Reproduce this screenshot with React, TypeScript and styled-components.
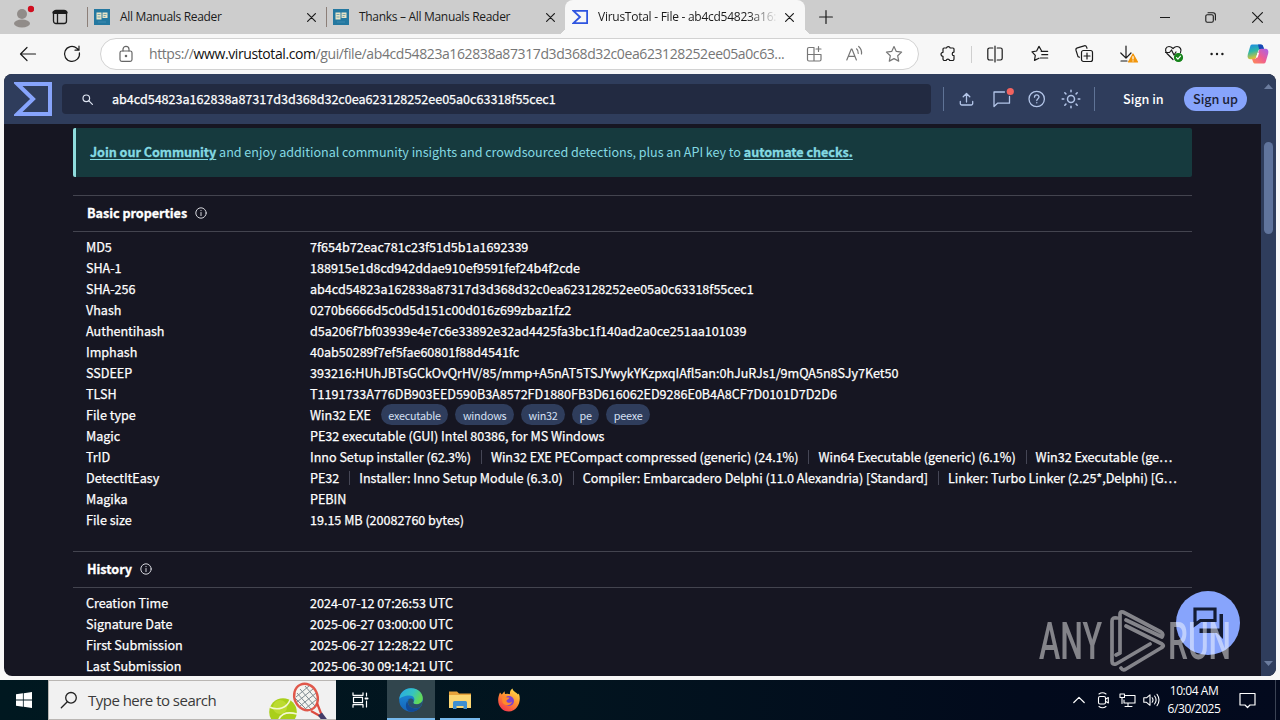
import React, { ReactNode } from "react"
import styled, { createGlobalStyle, css } from "styled-components"

const segoe = `"Open Sans", "Noto Sans", sans-serif`
const vt = `"Noto Sans CJK SC", "Noto Sans CJK JP", "Open Sans", sans-serif`

const GlobalStyle = createGlobalStyle`
  * {
    box-sizing: border-box;
  }
  body {
    margin: 0;
    overflow: hidden;
    font-family: ${segoe};
  }
`

const Screen = styled.div`
  position: relative;
  display: flex;
  flex-direction: column;
  width: 1280px;
  height: 720px;
  overflow: hidden;
  background-color: #f7f7f7;
`

/* a fixed slot that centers whatever icon it gets */
const Slot = styled.div<{ $w: number }>`
  display: flex;
  flex: none;
  align-items: center;
  justify-content: center;
  width: ${({ $w }) => $w}px;
  height: 100%;
`

const Gap = styled.div<{ $w: number }>`
  flex: none;
  width: ${({ $w }) => $w}px;
`

type IconProps = {
  w?: number
  h?: number
  stroke?: string
  sw?: number
  children: ReactNode
}
const Icon = ({
  w = 20,
  h = w,
  stroke = "#1b1b1b",
  sw = 1.2,
  children,
}: IconProps) => (
  <svg
    width={w}
    height={h}
    viewBox={`0 0 ${w} ${h}`}
    fill="none"
    stroke={stroke}
    strokeWidth={sw}
    strokeLinecap="round"
    strokeLinejoin="round"
  >
    {children}
  </svg>
)

/* ---------- tab strip ---------- */

const TabStrip = styled.div`
  display: flex;
  flex: none;
  height: 34px;
  background-color: #cdcdcd;
`
const TabDivider = styled.div`
  flex: none;
  align-self: center;
  width: 1px;
  height: 20px;
  background-color: #8c7f79;
`
const TabBox = styled.div<{ $active?: boolean }>`
  position: relative;
  display: flex;
  flex: none;
  align-items: center;
  width: ${({ $active }) => ($active ? 240 : 238)}px;
  padding-left: ${({ $active }) => ($active ? 7 : 6)}px;
  ${({ $active }) =>
    $active &&
    css`
      border-radius: 8px 8px 0 0;
      background-color: #f7f7f7;

      &:before,
      &:after {
        content: "";
        position: absolute;
        bottom: 0;
        width: 7px;
        height: 7px;
      }
      &:before {
        left: -7px;
        background: radial-gradient(circle at 0 0, transparent 7px, #f7f7f7 7px);
      }
      &:after {
        right: -7px;
        background: radial-gradient(
          circle at 100% 0,
          transparent 7px,
          #f7f7f7 7px
        );
      }
    `}
`
const TabTitle = styled.div<{ $spacing: number; $fade?: boolean }>`
  flex: none;
  width: 180px;
  margin-left: 10px;
  white-space: nowrap;
  font-size: 12px;
  line-height: 18px;
  letter-spacing: ${({ $spacing }) => $spacing}px;
  color: #1b1b1b;
  ${({ $fade }) =>
    $fade && "mask-image: linear-gradient(90deg, #000 150px, transparent 180px);"}
`
const StripCenter = styled.div`
  flex: 1;
`

const CloseIcon = ({ size = 9 }: { size?: number }) => (
  <Icon w={size} sw={1.2}>
    <path d={`M.6 .6 ${size - 0.6} ${size - 0.6}M${size - 0.6} .6 .6 ${size - 0.6}`} />
  </Icon>
)

const ReaderFavicon = () => (
  <svg width="16" height="16" viewBox="0 0 16 16">
    <rect width="16" height="16" fill="#2478a0" />
    <path d="M2.500 3.500h5v7h-5zM8.500 3.500h5v5.500h-5z" fill="#e9e4c6" />
    <path d="M3.500 5.500h3M3.500 8h3M9.500 5.500h3M9.500 7.500h2" stroke="#6aa0ae" strokeWidth=".9" />
    <path d="M4 13h8" stroke="#3f8bb0" />
  </svg>
)

const Sigma = ({ w, h, color, sw }: { w: number; h: number; color: string; sw: number }) => (
  <svg width={w} height={h} viewBox="0 0 38 34" preserveAspectRatio="none">
    <path
      d="M3.5 2H36v30H3.5L19 17z"
      fill="none"
      stroke={color}
      strokeWidth={sw}
      strokeMiterlimit="10"
    />
  </svg>
)

const Tabs = () => (
  <TabStrip>
    <Slot $w={44}>
      <Icon w={24} stroke="none">
        <circle cx="12" cy="9" r="5" fill="#918c89" />
        <ellipse cx="12" cy="18.500" rx="8" ry="4" fill="#918c89" />
        <circle cx="21" cy="4" r="3.2" fill="#d00e1f" />
      </Icon>
    </Slot>
    <Slot $w={32}>
      <Icon w={16} sw={1.3}>
        <rect x="1.5" y="1.5" width="13" height="13" rx="2.5" />
        <path d="M2 3.4h12" strokeWidth="3.2" />
        <path d="M5.5 4v10" />
      </Icon>
    </Slot>
    <Gap $w={11} />
    <TabDivider />
    <TabBox>
      <ReaderFavicon />
      <TabTitle $spacing={-0.32}>All Manuals Reader</TabTitle>
      <Slot $w={22}>
        <CloseIcon />
      </Slot>
    </TabBox>
    <TabDivider />
    <TabBox>
      <ReaderFavicon />
      <TabTitle $spacing={-0.31}>Thanks – All Manuals Reader</TabTitle>
      <Slot $w={22}>
        <CloseIcon />
      </Slot>
    </TabBox>
    <TabBox $active>
      <Sigma w={16} h={14} color="#2f55e0" sw={4.4} />
      <TabTitle $spacing={-0.26} $fade>
        VirusTotal - File - ab4cd54823a16:
      </TabTitle>
      <Slot $w={22}>
        <CloseIcon />
      </Slot>
    </TabBox>
    <Slot $w={42}>
      <Icon w={14}>
        <path d="M7 .6v12.8M.6 7h12.8" />
      </Icon>
    </Slot>
    <StripCenter />
    <Slot $w={42}>
      <Icon w={10}>
        <path d="M0 5.5h10" strokeWidth="1" />
      </Icon>
    </Slot>
    <Slot $w={48}>
      <Icon w={11} sw={1.1}>
        <rect x=".8" y="2.8" width="7.5" height="7.5" rx="1.5" />
        <path d="M3 .8h5a2.4 2.4 0 0 1 2.4 2.4v4.8" />
      </Icon>
    </Slot>
    <Slot $w={46}>
      <CloseIcon size={11} />
    </Slot>
  </TabStrip>
)

/* ---------- toolbar ---------- */

const Toolbar = styled.div`
  display: flex;
  flex: none;
  align-items: center;
  height: 40px;
  padding-left: 6px;
`
const AddressBar = styled.div`
  display: flex;
  flex: none;
  align-items: center;
  width: 819px;
  height: 32px;
  margin-left: 6px;
  padding-left: 5px;
  border: 1px solid #d2d2d2;
  border-radius: 16px;
  background-color: #fff;
`
const Url = styled.div`
  flex: none;
  width: 645px;
  margin-left: 3px;
  white-space: nowrap;
  font-size: 14px;
  line-height: 20px;
  letter-spacing: -0.4px;
  color: #767676;

  b {
    font-weight: 400;
    color: #111;
  }
`
const ToolDivider = styled.div`
  flex: none;
  width: 1px;
  height: 17px;
  background-color: #cfcfcf;
`

const BrowserBar = () => (
  <Toolbar>
    <Slot $w={44}>
      <Icon>
        <path d="M17.5 10H2.5M9 3.5 2.5 10 9 16.5" />
      </Icon>
    </Slot>
    <Slot $w={44}>
      <Icon>
        <path d="M17.4 8.8A7.5 7.5 0 1 1 14.8 4.2L16.8 6M17 2.2V6.2H13" />
      </Icon>
    </Slot>
    <AddressBar>
      <Slot $w={40}>
        <Icon w={16} h={18} stroke="#666">
          <rect x="2" y="6" width="12" height="10.4" rx="1.8" />
          <path d="M5 6V4.3a3 3 0 0 1 6 0V6" />
          <circle cx="8" cy="11" r=".7" fill="#666" />
        </Icon>
      </Slot>
      <Url>
        https://<b>www.virustotal.com</b>
        /gui/file/ab4cd54823a162838a87317d3d368d32c0ea623128252ee05a0c63...
      </Url>
      <Slot $w={40}>
        <Icon w={18} stroke="#777">
          <path d="M8.5 2.5H4A1.5 1.5 0 0 0 2.5 4v10.5A1.5 1.5 0 0 0 4 16h10.5a1.5 1.5 0 0 0 1.5-1.5V9.5H2.5M9 2.5V16M13.5 1.5v5M11 4h5" />
        </Icon>
      </Slot>
      <Slot $w={40}>
        <Icon w={18} stroke="#777">
          <path d="M1.8 15 6.3 4h.6l4.5 11M3.4 11.3h6.4M11.5 3.8q2 1.6 1.7 4.6M13.7 1.5q3.3 2.8 2.8 7.5" />
        </Icon>
      </Slot>
      <Slot $w={40}>
        <Icon w={18} stroke="#777">
          <path d="m9 1.5 2.3 4.9 5.3.7-3.9 3.7 1 5.3L9 13.6l-4.7 2.5 1-5.3L1.4 7.1l5.3-.7z" />
        </Icon>
      </Slot>
    </AddressBar>
    <Gap $w={8} />
    <Slot $w={42}>
      <Icon w={18}>
        <path d="M5 3h2.4a2 2 0 0 1 3.8 0H14a1 1 0 0 1 1 1v3.100a1.800 1.800 0 1 0 0 3.600V14a1.500 1.500 0 0 1-1.500 1.500h-2.800a1.900 1.900 0 0 0-3.600 0H5.500A1.500 1.500 0 0 1 4 14v-2.700a2 2 0 0 1 0-4V4a1 1 0 0 1 1-1z" />
      </Icon>
    </Slot>
    <Gap $w={2} />
    <ToolDivider />
    <Gap $w={1} />
    <Slot $w={44}>
      <Icon w={18}>
        <path d="M6.8 3H3.500A1.700 1.700 0 0 0 1.800 4.700v8.600A1.700 1.700 0 0 0 3.500 15h3.300M11.200 3h3.300a1.700 1.700 0 0 1 1.700 1.700v8.600a1.700 1.700 0 0 1-1.700 1.700h-3.300M9 1v16" />
      </Icon>
    </Slot>
    <Slot $w={45}>
      <Icon w={18}>
        <path d="M10.5 5.8 8 1.4 5.6 6 1 6.8l3.3 3.6-.8 5 4.4-2.2M10.2 6.3h6.5M10.8 9.7h5.9M9.3 13h7.4" />
      </Icon>
    </Slot>
    <Slot $w={44}>
      <Icon>
        <rect x="7.5" y="6.5" width="11" height="11" rx="2" />
        <path d="M13 9v6M10 12h6M5.5 13.2 4 12.6 2 6.2a2 2 0 0 1 1.4-2.4l6.8-2a2 2 0 0 1 2.4 1.3l.4 1.2" />
      </Icon>
    </Slot>
    <Slot $w={46}>
      <Icon w={22}>
        <path d="M8 3v12M2.8 10 8 15.2 13 10M3 18h6" />
        <path d="m15 11 4.500 8h-9z" fill="#f2960c" stroke="#f2960c" />
        <path d="M15 13.500v2.500M15 17.800v.1" stroke="#fff" />
      </Icon>
    </Slot>
    <Slot $w={43}>
      <Icon w={22}>
        <path d="M10 16.5 4 10.5C1 7 3 3.5 6 3.5c2 0 3 1 4 2 1-1 2-2 4-2 3 0 5 3 3.500 6M2.500 9.500h4L8.500 7l2.500 5 2-3" />
        <circle cx="15.5" cy="14.5" r="4" fill="#17841c" stroke="#17841c" />
        <path d="m13.500 14.700 1.400 1.400 2.600-3" stroke="#fff" />
      </Icon>
    </Slot>
    <Slot $w={43}>
      <Icon w={16} stroke="none">
        <g fill="#1b1b1b">
          <circle cx="2.6" cy="8" r="1.2" />
          <circle cx="8" cy="8" r="1.2" />
          <circle cx="13.4" cy="8" r="1.2" />
        </g>
      </Icon>
    </Slot>
    <Slot $w={40}>
      <svg width="22" height="22" viewBox="0 0 22 22">
        <defs>
          <linearGradient id="cpA" x1="0" y1="0" x2=".3" y2="1">
            <stop offset="0" stopColor="#1b88e8" />
            <stop offset=".5" stopColor="#2fb8a8" />
            <stop offset="1" stopColor="#e9c42c" />
          </linearGradient>
          <linearGradient id="cpB" x1="1" y1="0" x2="0" y2="1">
            <stop offset="0" stopColor="#a364f0" />
            <stop offset=".5" stopColor="#ee5d92" />
            <stop offset="1" stopColor="#ff8d54" />
          </linearGradient>
        </defs>
        <path
          d="M5 1.5h8.5c1.6 0 2.2.8 2.7 2.3l.8 2.4h-3.5c-1.4 0-2 .8-2.5 2.3L9.2 14c-.5 1.6-1.1 2.3-2.5 2.3H3.5C1 16.300.1 14.200.8 11.500L3 4c.5-1.700.9-2.500 2-2.500z"
          fill="url(#cpA)"
        />
        <path d="M11 1.500h3c1.300 0 1.900.8 2.300 2.300l.8 2.400h-5z" fill="#1747b5" />
        <path
          d="M17 20.500H8.500c-1.600 0-2.200-.8-2.700-2.300L5 15.800h2.500c1.400 0 2-.8 2.500-2.300l1.800-5.500c.5-1.600 1.100-2.300 2.500-2.300h4.200c2.500 0 3.400 2.100 2.700 4.800L19 18c-.5 1.700-.9 2.500-2 2.500z"
          fill="url(#cpB)"
        />
        <path d="m10.500 10 1.700-.2-1.600 4.700-1.500.3z" fill="#fff" />
      </svg>
    </Slot>
  </Toolbar>
)

/* ---------- VirusTotal page ---------- */

const Page = styled.div`
  display: flex;
  flex: none;
  width: 1272px;
  height: 602px;
  margin-left: 4px;
  overflow: hidden;
  border-radius: 8px;
  background-color: #161622;
  font-family: ${vt};
  font-size: 12.6px;
  letter-spacing: -0.025px;
  color: #fff;
`
const PageMain = styled.div`
  position: relative;
  display: flex;
  flex-direction: column;
  width: 1257px;
`
const Header = styled.header`
  display: flex;
  flex: none;
  align-items: center;
  height: 50px;
  padding-left: 10px;
  background-color: #2f3d5c;
`
const SearchField = styled.div`
  display: flex;
  align-items: center;
  width: 869px;
  height: 30px;
  margin: 0 12px 0 10px;
  border-radius: 4px;
  background-color: #222a41;
`
const SearchText = styled.span`
  line-height: 20px;
  -webkit-text-stroke: 0.25px;
`
const HeaderDivider = styled.div`
  width: 1px;
  height: 24px;
  background-color: #5f7396;
`
const SignIn = styled.a`
  width: 61px;
  margin-left: 28px;
  font-weight: 500;
  line-height: 20px;
  white-space: nowrap;
`
const SignUp = styled.a`
  width: 63px;
  height: 24px;
  border-radius: 12px;
  font-weight: 500;
  line-height: 24px;
  text-align: center;
  background-color: #87a4fc;
  color: #1a2036;
`
const Content = styled.main`
  display: flex;
  flex-direction: column;
  width: 1119px;
  margin-left: 69px;
  padding-top: 4px;
`
const Banner = styled.div`
  height: 49px;
  padding-left: 14px;
  border-left: 3px solid #8fdcdd;
  border-radius: 2px;
  line-height: 48px;
  letter-spacing: -0.035px;
  background-color: #163a3e;
  color: #84d9e2;

  b {
    font-weight: 700;
    text-decoration: underline;
    text-underline-offset: 2px;
    -webkit-text-stroke: 0.3px;
  }
`
const Section = styled.section`
  margin-top: 18px;

  & + & {
    margin-top: 21px;
  }
`
const SectionHead = styled.div`
  display: flex;
  align-items: center;
  gap: 8px;
  height: 37px;
  padding: 0 0 1px 14px;
  border: solid #43444f;
  border-width: 1px 0;
`
const SectionTitle = styled.h3`
  margin: 0;
  padding-bottom: 1px;
  font-size: inherit;
  font-weight: 700;
  line-height: 18px;
  -webkit-text-stroke: 0.3px;
`
const Rows = styled.div`
  padding: 4px 0 0 13px;
`
const Row = styled.div`
  display: flex;
  align-items: center;
  height: 21px;
  line-height: 21px;
  white-space: nowrap;
  -webkit-text-stroke: 0.25px;
`
const Label = styled.div`
  flex: none;
  width: 224px;
`
const Part = styled.span`
  & + & {
    margin-left: 10px;
    padding-left: 10px;
    background: linear-gradient(#454655, #454655) 0 50% / 1px 14px no-repeat;
  }
`
const Chip = styled.span`
  height: 21px;
  padding: 0 7.5px;
  margin-left: 7px;
  border-radius: 11px;
  line-height: 22px;
  font-size: 10.8px;
  letter-spacing: -0.22px;
  background-color: #2f3d5c;
  color: #d6e0f5;
  -webkit-text-stroke: 0;

  ${Part} + & {
    margin-left: 10px;
  }
`
const ScrollTrack = styled.div`
  display: flex;
  flex-direction: column;
  align-items: center;
  justify-content: space-between;
  width: 15px;
  padding: 10px 0;
  background-color: #2f3d5c;
`
const ScrollThumb = styled.div`
  width: 9px;
  height: 92px;
  margin: 53px 0 auto;
  border-radius: 5px;
  background-color: #60749c;
`
const ChatButton = styled.div`
  position: absolute;
  left: 1172px;
  top: 517px;
  display: flex;
  align-items: center;
  justify-content: center;
  width: 64px;
  height: 64px;
  border-radius: 50%;
  background-color: #87a4fc;
`

type RowData = [string, string[], string[]?]

const basic: RowData[] = [
  ["MD5", ["7f654b72eac781c23f51d5b1a1692339"]],
  ["SHA-1", ["188915e1d8cd942ddae910ef9591fef24b4f2cde"]],
  ["SHA-256", ["ab4cd54823a162838a87317d3d368d32c0ea623128252ee05a0c63318f55cec1"]],
  ["Vhash", ["0270b6666d5c0d5d151c00d016z699zbaz1fz2"]],
  ["Authentihash", ["d5a206f7bf03939e4e7c6e33892e32ad4425fa3bc1f140ad2a0ce251aa101039"]],
  ["Imphash", ["40ab50289f7ef5fae60801f88d4541fc"]],
  ["SSDEEP", ["393216:HUhJBTsGCkOvQrHV/85/mmp+A5nAT5TSJYwykYKzpxqIAfl5an:0hJuRJs1/9mQA5n8SJy7Ket50"]],
  ["TLSH", ["T1191733A776DB903EED590B3A8572FD1880FB3D616062ED9286E0B4A8CF7D0101D7D2D6"]],
  ["File type", ["Win32 EXE"], ["executable", "windows", "win32", "pe", "peexe"]],
  ["Magic", ["PE32 executable (GUI) Intel 80386, for MS Windows"]],
  [
    "TrID",
    [
      "Inno Setup installer (62.3%)",
      "Win32 EXE PECompact compressed (generic) (24.1%)",
      "Win64 Executable (generic) (6.1%)",
      "Win32 Executable (ge…",
    ],
  ],
  [
    "DetectItEasy",
    [
      "PE32",
      "Installer: Inno Setup Module (6.3.0)",
      "Compiler: Embarcadero Delphi (11.0 Alexandria) [Standard]",
      "Linker: Turbo Linker (2.25*,Delphi) [G…",
    ],
  ],
  ["Magika", ["PEBIN"]],
  ["File size", ["19.15 MB (20082760 bytes)"]],
]

const history: RowData[] = [
  ["Creation Time", ["2024-07-12 07:26:53 UTC"]],
  ["Signature Date", ["2025-06-27 03:00:00 UTC"]],
  ["First Submission", ["2025-06-27 12:28:22 UTC"]],
  ["Last Submission", ["2025-06-30 09:14:21 UTC"]],
]

const Properties = ({ title, rows }: { title: string; rows: RowData[] }) => (
  <Section>
    <SectionHead>
      <SectionTitle>{title}</SectionTitle>
      <Icon w={12} stroke="#d5d6dc" sw={1}>
        <circle cx="6" cy="6" r="5.2" />
        <path d="M6 5.5V8.600M6 3.500v.2" />
      </Icon>
    </SectionHead>
    <Rows>
      {rows.map(([label, parts, chips]) => (
        <Row key={label}>
          <Label>{label}</Label>
          {parts.map((part) => (
            <Part key={part}>{part}</Part>
          ))}
          {chips?.map((chip) => (
            <Chip key={chip}>{chip}</Chip>
          ))}
        </Row>
      ))}
    </Rows>
  </Section>
)

const headIcon = { stroke: "#b3c5e8", sw: 1.3 }

const VirusTotal = () => (
  <Page>
    <PageMain>
      <Header>
        <Sigma w={38} h={34} color="#87a4fc" sw={4} />
        <SearchField>
          <Slot $w={50}>
            <Icon w={12} stroke="#dfe5f2" sw={1.2}>
              <circle cx="5.300" cy="5.300" r="3.300" />
              <path d="m7.900 7.900 3.500 3.500" />
            </Icon>
          </Slot>
          <SearchText>
            ab4cd54823a162838a87317d3d368d32c0ea623128252ee05a0c63318f55cec1
          </SearchText>
        </SearchField>
        <HeaderDivider />
        <Gap $w={5} />
        <Slot $w={35}>
          <Icon w={16} {...headIcon}>
            <path d="M7.500 11V3M4.200 5.800 7.500 2.500l3.300 3.300M1.300 10.500v2a1.500 1.500 0 0 0 1.500 1.500h9.400a1.500 1.500 0 0 0 1.500-1.500v-2" />
          </Icon>
        </Slot>
        <Slot $w={35}>
          <Icon w={24} {...headIcon}>
            <path d="M14.500 5H4v14.500l3.500-3.300h12V9.500" />
            <circle cx="20.300" cy="4.500" r="3.600" fill="#f2635f" stroke="none" />
          </Icon>
        </Slot>
        <Slot $w={35}>
          <Icon w={18} {...headIcon}>
            <circle cx="8.700" cy="9" r="7.700" />
            <path d="M6.500 7.200c0-3 4.500-3 4.500-.2 0 1.600-2.200 1.700-2.200 3.500M8.800 12.700v.1" />
          </Icon>
        </Slot>
        <Slot $w={34}>
          <Icon w={20} {...headIcon} sw={1.5}>
            <circle cx="10" cy="10" r="3.500" />
            <path d="M10 1.200v1.600M10 17.200v1.600M1.200 10h1.600M17.200 10h1.600M3.800 3.800l1.100 1.100M15.100 15.100l1.100 1.100M3.800 16.200l1.100-1.100M15.100 4.900l1.100-1.100" />
          </Icon>
        </Slot>
        <Gap $w={6} />
        <HeaderDivider />
        <SignIn>Sign in</SignIn>
        <SignUp>Sign up</SignUp>
      </Header>
      <Content>
        <Banner>
          <b>Join our Community</b> and enjoy additional community insights and
          crowdsourced detections, plus an API key to <b>automate checks.</b>
        </Banner>
        <Properties title="Basic properties" rows={basic} />
        <Properties title="History" rows={history} />
      </Content>
      <ChatButton>
        <svg width="32" height="34" viewBox="0 0 32 34">
          <path
            d="M3 3h20v11.500H8.500L3 18.500z"
            fill="none"
            stroke="#141c33"
            strokeWidth="3.200"
          />
          <path d="M27.500 8h3.500v25l-6-6H7.500v-4.500h20z" fill="#141c33" />
        </svg>
      </ChatButton>
    </PageMain>
    <ScrollTrack>
      <svg width="9" height="5">
        <path d="M0 5 4.500 0 9 5z" fill="#6b7c9e" />
      </svg>
      <ScrollThumb />
      <svg width="9" height="5">
        <path d="M0 0 4.500 5 9 0z" fill="#6b7c9e" />
      </svg>
    </ScrollTrack>
  </Page>
)

/* ---------- ANY.RUN watermark ---------- */

const Watermark = styled.svg`
  position: absolute;
  left: 1036px;
  top: 606px;
  opacity: 0.47;
`

const AnyRun = () => (
  <Watermark width="210" height="80" viewBox="0 0 210 80">
    <g
      fill="#fff"
      fontFamily="Roboto, sans-serif"
      fontWeight="500"
      fontSize="51"
    >
      <text x="3" y="53" textLength="63" lengthAdjust="spacingAndGlyphs">
        ANY
      </text>
      <text x="132" y="53" textLength="63" lengthAdjust="spacingAndGlyphs">
        RUN
      </text>
    </g>
    <g fill="none" stroke="#fff" strokeWidth="3.700" strokeLinejoin="round" strokeLinecap="round">
      <path d="M84 46V8q0-3 3-2l38 20q3 2 1 5L90 14M81 12q-5-1-5 3v40q0 4 4 3l34-20M90 20l36 18q3 2-1 4L90 63q-3 2-5-1M84 47 80 49" />
    </g>
  </Watermark>
)

/* ---------- Windows taskbar ---------- */

const Taskbar = styled.div`
  display: flex;
  flex: none;
  height: 40px;
  margin-top: 4px;
  background: linear-gradient(90deg, #001820 0, #02141f 45%, #020a1c 80%, #030a1e);
  color: #fff;
`
const TaskSearch = styled.div`
  display: flex;
  align-items: center;
  width: 288px;
  border: 1px solid #b9b6b3;
  border-width: 1px 0 1px 1px;
  background-color: #f1f1f1;
  font-size: 15px;
  letter-spacing: -0.52px;
  color: #3a3a3a;
`
const TaskLabel = styled.span`
  flex: none;
  width: 180px;
`
const AppSlot = styled(Slot)<{ $focused?: boolean; $running?: boolean }>`
  ${({ $focused }) => $focused && "background-color: #31454d;"}
  ${({ $running }) => $running && "box-shadow: inset 0 -2px 0 #76b9ed;"}
`
const Tray = styled.div`
  display: flex;
  margin-left: auto;
`
const Clock = styled.div`
  width: 62px;
  padding-top: 2px;
  font-size: 12px;
  line-height: 18px;
  letter-spacing: -0.45px;
  text-align: center;
  white-space: nowrap;
`
const DesktopEdge = styled.div`
  width: 5px;
  border-left: 1px solid #3b4354;
`

const Sports = () => (
  <svg width="62" height="38" viewBox="0 0 62 38">
    <circle cx="15" cy="31" r="13.800" fill="#a9cf1a" />
    <circle cx="12" cy="26" r="7" fill="#c4e03a" opacity=".7" />
    <path d="M1.500 26C10 30 19 27 22 19M10 44c0-11 8-14 19-11" fill="none" stroke="#f4f8d0" strokeWidth="1.600" />
    <g fill="none">
      <ellipse cx="38" cy="16" rx="11.500" ry="13.500" transform="rotate(-25 38 16)" fill="#f4f4f0" stroke="#e0584b" strokeWidth="2.400" />
      <path
        d="m29 12 14 16M32 8l15 17M37 5l11 13M27 17l10 10M28 16 41 5M29 21 45 8M32 25 48 12M37 28 49 18"
        stroke="#7f8b91"
        strokeWidth="1"
      />
      <path d="m43 30 9 5M49 22l5 13" stroke="#dd4b3f" strokeWidth="2.200" />
      <path d="m52 33 6 8" stroke="#423c68" strokeWidth="5" />
    </g>
  </svg>
)

const EdgeLogo = () => (
  <svg width="24" height="24" viewBox="0 0 24 24">
    <defs>
      <linearGradient id="edA" x1="0" y1="0" x2="1" y2=".4">
        <stop offset="0" stopColor="#28a8e8" />
        <stop offset=".6" stopColor="#35c4c0" />
        <stop offset="1" stopColor="#62d957" />
      </linearGradient>
      <linearGradient id="edB" x1="0" y1="0" x2="0" y2="1">
        <stop offset="0" stopColor="#1d90dd" />
        <stop offset="1" stopColor="#1563b8" />
      </linearGradient>
    </defs>
    <circle cx="12" cy="12" r="11.800" fill="url(#edB)" />
    <path
      d="M.3 11C1 4.500 6 .2 12 .2c7 0 11.800 4.800 11.800 10 0 4-3 6-6.300 6-3 0-3.700-1.200-3-2.200 2.200-3 .3-6.500-4-6.500C5.500 7.500 1.500 9.500.3 11z"
      fill="url(#edA)"
    />
    <path
      d="M8.500 13c0 5 4 7.500 8.500 7.500 2 0 3.500-.6 4.500-1.200C19 22.500 15 24 12 23.800 6 23 5 15 10.500 10.500 9 11 8.500 12 8.500 13z"
      fill="#124a96"
    />
    <path d="M14.500 14c-.7 1 0 2.200 3 2.200 2.500 0 5-1.200 6-3.500 0 3-1 5-2.500 6.500-4 2.500-12 1-12-5.200 0-2 1-3 2-3.500 2.500-.5 4.500 1.500 3.500 3.500z" fill="#31454d" opacity=".75" />
  </svg>
)

const ExplorerLogo = () => (
  <svg width="22" height="20" viewBox="0 0 22 20">
    <path d="M0 1.500h8l2 2h12V18H0z" fill="#e8a33b" />
    <path d="M0 5h22v13H0z" fill="#fcd672" />
    <path d="M4 19v-6.500Q4 11 5.500 11h11q1.500 0 1.500 1.500V19h-3.500v-3h-7v3z" fill="#3f8fd0" />
  </svg>
)

const FirefoxLogo = () => (
  <svg width="24" height="24" viewBox="0 0 24 24">
    <defs>
      <linearGradient id="ffA" x1=".8" y1="0" x2=".2" y2="1">
        <stop offset="0" stopColor="#ffe14d" />
        <stop offset=".45" stopColor="#ff9130" />
        <stop offset="1" stopColor="#f5304f" />
      </linearGradient>
    </defs>
    <path
      d="M3 4.500 4.800 6.500 7.500 3.200 8 6q3-.5 5 .2C12.500 3.500 14 1.500 15.500.5c.5 3 4 3.800 5.500 6l.8-1c3 7-1 18-10 18C4 23.500-2 15 3 4.500z"
      fill="url(#ffA)"
    />
    <circle cx="12" cy="13" r="5" fill="#7b42cf" />
    <path d="M5 9.500c3-2 5 .5 7.500 0-.5 2-3 2-3 3.500 0 2 4 2.500 5.500.5-.5 4-7 5.500-9.500 1z" fill="#ff8a2c" />
  </svg>
)

const WindowsBar = () => (
  <Taskbar>
    <Slot $w={48}>
      <svg width="16" height="16" viewBox="0 0 16 16">
        <path
          d="M0 2.300 6.900 1.300V7.600H0zM7.700 1.200 16 0v7.600H7.700zM0 8.400h6.900v6.300L0 13.700zM7.700 8.400H16V16L7.700 14.800z"
          fill="#fff"
        />
      </svg>
    </Slot>
    <TaskSearch>
      <Slot $w={39}>
        <Icon w={18} stroke="#222" sw={1.3}>
          <circle cx="11" cy="6.800" r="5.300" />
          <path d="m7.300 10.700-6 6" />
        </Icon>
      </Slot>
      <TaskLabel>Type here to search</TaskLabel>
      <Sports />
    </TaskSearch>
    <Slot $w={48}>
      <Icon w={17} h={16} stroke="#fff" sw={1.2}>
        <path d="M1 .8v2.500h10V.8M1 15.200v-2.500h10v2.500M1.500 5.300h9v5.400h-9zM14.500 1v3M14.500 9v6" />
        <path d="M13.500 6.500h2" strokeWidth="2" />
      </Icon>
    </Slot>
    <Gap $w={3} />
    <AppSlot $w={48} $focused $running>
      <EdgeLogo />
    </AppSlot>
    <Gap $w={5} />
    <AppSlot $w={40} $running>
      <ExplorerLogo />
    </AppSlot>
    <Gap $w={5} />
    <Slot $w={48}>
      <FirefoxLogo />
    </Slot>
    <Tray>
      <Slot $w={25}>
        <Icon w={12} stroke="#fff">
          <path d="M.8 8.500 6 3.300l5.200 5.200" />
        </Icon>
      </Slot>
      <Slot $w={24}>
        <Icon w={14} h={18} stroke="#fff" sw={1.100}>
          <rect x="2.500" y="5.500" width="7" height="7.500" rx="1.500" />
          <path d="m9.800 8 2.500-1.500v5.500L9.800 10.500M3 3q3.500-2.600 7 0M3 15.500q3.500 2.600 7 0" />
        </Icon>
      </Slot>
      <Slot $w={24}>
        <Icon w={17} h={16} stroke="#fff" sw={1.100}>
          <path d="M6.500 3.500H16v7.500H5V8M9 11v3M6 14.500h7M1 2h4.500v3.500H1zM3 5.500v6" />
        </Icon>
      </Slot>
      <Slot $w={24}>
        <Icon w={17} h={16} stroke="#fff" sw={1.100}>
          <path d="M.8 5.800h2.700l3.500-3v10.500l-3.500-3H.8zM9.200 5.800q1.600 2.200 0 4.400M11.600 4q3 4 0 8M14 2.300q4 5.700 0 11.400" />
        </Icon>
      </Slot>
      <Clock>
        10:04 AM
        <br />
        6/30/2025
      </Clock>
      <Slot $w={44}>
        <Icon w={17} h={18} stroke="#fff">
          <path d="M1 2.500h15v11.500h-5L8.500 16.500 6 14H1z" />
        </Icon>
      </Slot>
      <Gap $w={6} />
      <DesktopEdge />
    </Tray>
  </Taskbar>
)

const App = () => (
  <>
    <GlobalStyle />
    <Screen>
      <Tabs />
      <BrowserBar />
      <VirusTotal />
      <WindowsBar />
      <AnyRun />
    </Screen>
  </>
)

export default App
